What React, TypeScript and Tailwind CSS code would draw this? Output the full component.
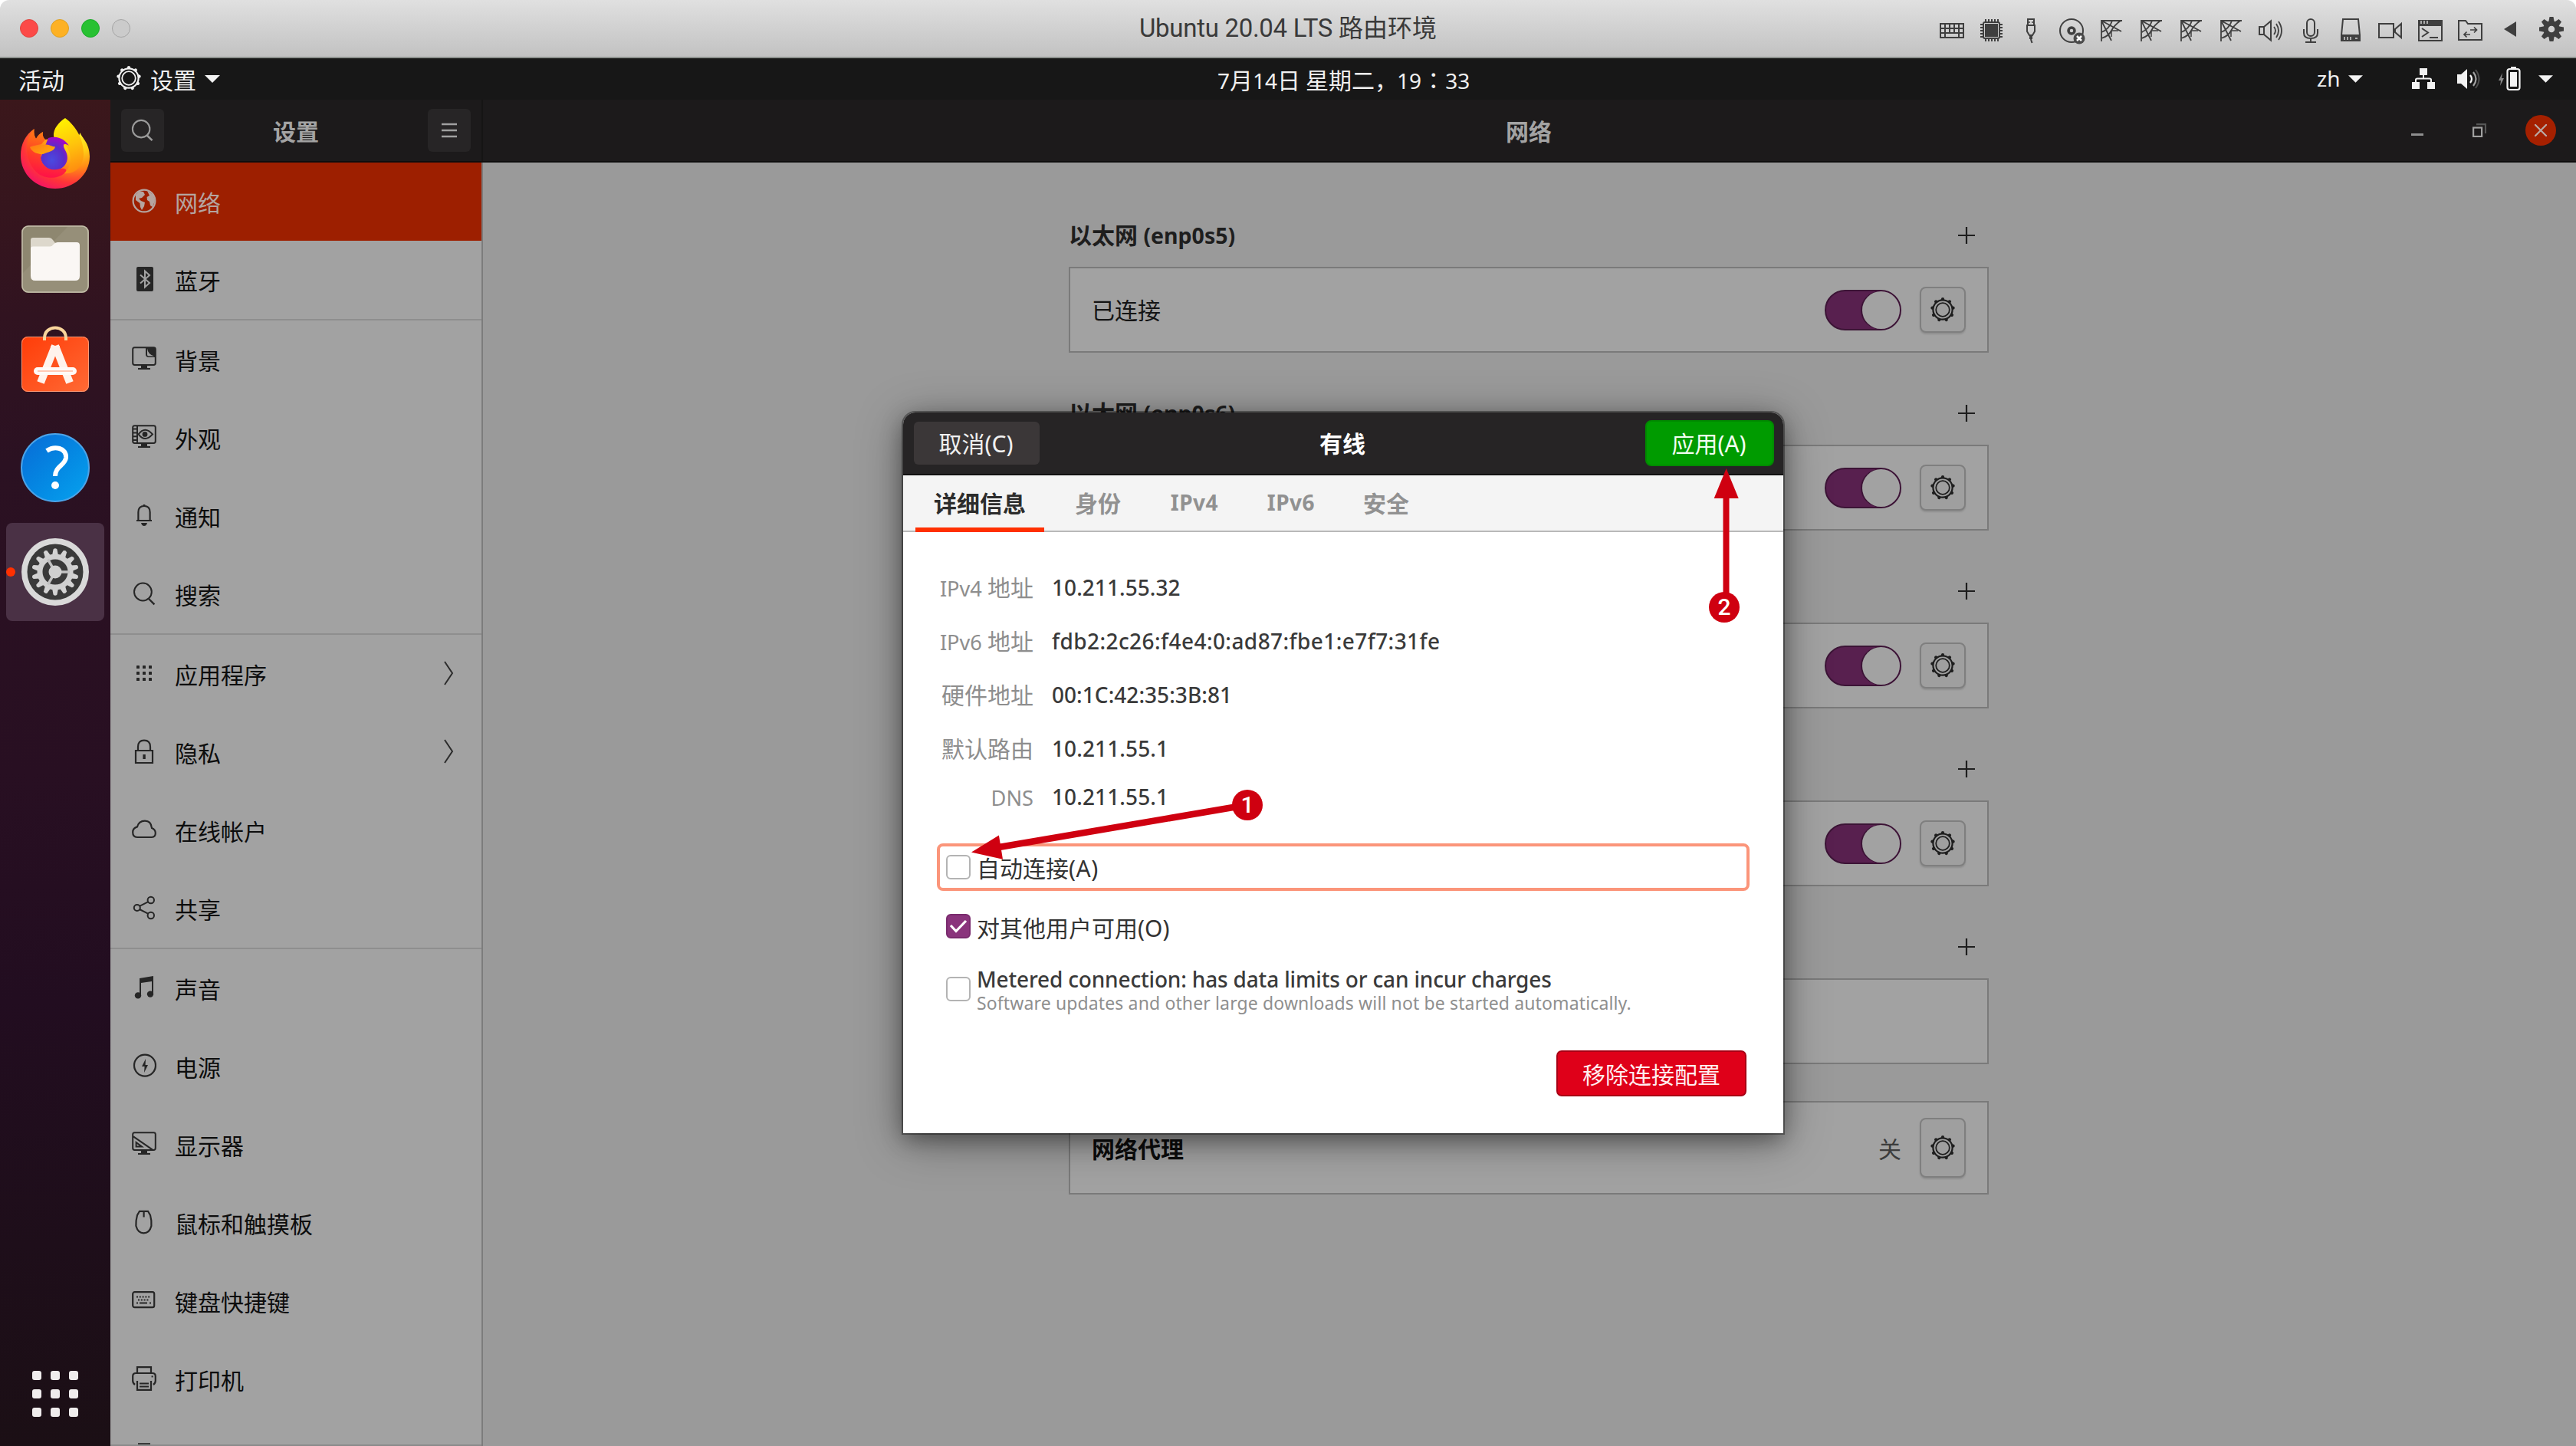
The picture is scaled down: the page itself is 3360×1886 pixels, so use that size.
import React from "react";

const SANS = "font-['Noto_Sans','Noto_Sans_CJK_SC',sans-serif]";

/* Latin runs are set slightly smaller than the Chinese characters beside them. */
function Txt({ children, latin = "text-[0.94em]" }: { children: string; latin?: string }) {
  const runs = children.split(/([\x20-\x7e]+)/).filter(Boolean);
  return (
    <>
      {runs.map((r, i) =>
        /^[\x20-\x7e]+$/.test(r) ? (
          <span key={i} className={latin}>{r}</span>
        ) : (
          <span key={i}>{r}</span>
        )
      )}
    </>
  );
}

/* ---------- host window title bar ---------- */

function ToolIcon({ children }: { children: React.ReactNode }) {
  return (
    <div className="flex w-[52px] justify-center">
      <svg className="h-9 w-9" viewBox="0 0 36 36" fill="none" stroke="#3f3f3f" strokeWidth="2">{children}</svg>
    </div>
  );
}

function NetPortIcon() {
  return (
    <ToolIcon>
      <path d="M5 32V5H32M5 5L31 19M5 5L18 31M5 28C12 26 16 22 18 18C20 14 23 10 30 5M5 20C11 18 17 12 19 5" strokeWidth="1.8" />
      <path d="M18 18L27 18M18 18V26" strokeWidth="1.5" />
    </ToolIcon>
  );
}

function HostBar() {
  return (
    <div className="flex h-[76px] items-center rounded-t-[12px] border-b-2 border-[#8f9390] bg-linear-to-b from-[#e0e0e0] to-[#c2c2c2] pl-[26px]">
      <div className="flex w-[1460px] gap-4">
        <div className="size-6 rounded-full border border-[#e0443e] bg-[#fc4a48]" />
        <div className="size-6 rounded-full border border-[#dea123] bg-[#fdb124]" />
        <div className="size-6 rounded-full border border-[#1aab29] bg-[#28c132]" />
        <div className="size-6 rounded-full border border-[#a5a5a5] bg-[#cbcbcb]" />
      </div>
      <div className="w-[1034px] whitespace-nowrap text-[32px] leading-[40px] text-[#3a3a3a] font-normal font-['Roboto','Noto_Sans_CJK_SC',sans-serif]">
        <Txt latin="text-[33px] tracking-[-0.3px]">Ubuntu 20.04 LTS 路由环境</Txt>
      </div>
      <div className="flex pt-[6px]">
        <ToolIcon>
          <path d="M3 9H33V27H3ZM3 15H33M3 21H33M9 9V21M15 9V21M21 9V21M27 9V21M9 21V27M27 21V27" />
        </ToolIcon>
        <ToolIcon>
          <rect x="7" y="7" width="21" height="21" rx="2" />
          <rect x="10" y="10" width="15" height="15" fill="#3f3f3f" />
          <path d="M10 3V7M14 3V7M18 3V7M22 3V7M26 3V7M10 28V32M14 28V32M18 28V32M22 28V32M26 28V32M3 10H7M3 14H7M3 18H7M3 22H7M3 26H7M28 10H32M28 14H32M28 18H32M28 22H32M28 26H32" />
        </ToolIcon>
        <ToolIcon>
          <path d="M13 3H21V11H13ZM12 11H22V19L19 24H15L12 19Z" />
          <path d="M15 6V8M19 6V8" strokeWidth="1.5" />
          <path d="M15 24H19V29H15Z" fill="#3f3f3f" stroke="none" />
          <path d="M17 28C17 32 18 31 18.500 34" />
        </ToolIcon>
        <ToolIcon>
          <circle cx="18" cy="18" r="15" />
          <circle cx="18" cy="18" r="4" strokeWidth="3.500" />
          <circle cx="28" cy="28" r="7.500" fill="#4a4a4a" stroke="none" />
          <path d="M25 25L31 31M31 25L25 31" stroke="#fff" strokeWidth="2.500" />
        </ToolIcon>
        <NetPortIcon />
        <NetPortIcon />
        <NetPortIcon />
        <NetPortIcon />
        <ToolIcon>
          <path d="M3 13H9L18 5.500V30.500L9 23H3ZM9 13V23" />
          <path d="M22 13Q26 18 22 23M25 9Q31 18 25 27M28 6Q36 18 28 30" strokeWidth="1.8" />
        </ToolIcon>
        <ToolIcon>
          <rect x="13" y="3" width="10" height="22" rx="5" />
          <path d="M9 16V21Q9 28 18 28Q27 28 27 21V16M18 28V33M11 33H25" />
        </ToolIcon>
        <ToolIcon>
          <path d="M8 3H28L30 24V31H6V24Z" />
          <path d="M6 24H30V31H6Z" fill="#3f3f3f" />
          <path d="M10 26V30M14 26V30M18 26V30M24 28H27" stroke="#d0d0d0" strokeWidth="1.5" />
        </ToolIcon>
        <ToolIcon>
          <path d="M3 9H22V27H3ZM24 16L32 9V27L24 20Z" />
        </ToolIcon>
        <ToolIcon>
          <path d="M3 5H33V31H3Z" />
          <path d="M3 5H33V11H3Z" fill="#3f3f3f" />
          <path d="M6 5V9M10 5V9M14 5V9" stroke="#d0d0d0" strokeWidth="1.5" />
          <path d="M7 15L15 20.500L7 26M17 27H28" />
        </ToolIcon>
        <ToolIcon>
          <path d="M3 30V5H12L15 9H33V30Z" />
          <path d="M11 23H18M13.500 19.500L10 23L13.500 26.500M18 17H26M23 13.500L26.500 17L23 20.500" strokeWidth="1.7" />
        </ToolIcon>
        <ToolIcon>
          <path d="M10 16L26 6V26Z" fill="#3f3f3f" stroke="none" />
        </ToolIcon>
        <ToolIcon>
          {[0, 45, 90, 135, 180, 225, 270, 315].map((a) => (
            <path key={a} d="M17.500 0H22.500L24 8H16Z" fill="#3f3f3f" stroke="none" transform={`rotate(${a} 20 16)`} />
          ))}
          <circle cx="20" cy="16" r="7.500" strokeWidth="6.500" />
        </ToolIcon>
      </div>
    </div>
  );
}

/* ---------- shared icons ---------- */

function GearIcon({ className }: { className: string }) {
  return (
    <svg className={className} viewBox="0 0 16 16" fill="none" stroke="currentColor">
      <circle cx="8" cy="8" r="6.300" strokeWidth="1.1" />
      <circle cx="8" cy="8" r="4.400" strokeWidth="0.9" />
      {[0, 40, 80, 120, 160, 200, 240, 280, 320].map((a) => (
        <circle key={a} cx="8" cy="1.100" r="1.050" fill="currentColor" stroke="none" transform={`rotate(${a} 8 8)`} />
      ))}
    </svg>
  );
}

function Caret({ className }: { className: string }) {
  return (
    <svg className={className} viewBox="0 0 20 10">
      <path d="M0 0H20L10 10Z" fill="#f2f2f2" />
    </svg>
  );
}

/* ---------- GNOME top panel ---------- */

function TopPanel() {
  return (
    <div className="flex h-[54px] items-center bg-[#171717] text-[30px] leading-[54px] text-[#f0f0f0] whitespace-nowrap">
      <div className="w-[128px] pt-1 pl-[24px]">活动</div>
      <div className="flex h-[54px] w-[1460px] items-center pl-[24px]">
        <GearIcon className="mb-[2px] size-8" />
        <span className="pt-1 pl-[12px]">设置</span>
        <Caret className="ml-[11px] h-[10px] w-5" />
      </div>
      <div className="flex h-[54px] w-[1434px] items-center pt-[3px]">
        <span className="mr-[7px]"><Txt latin="text-[28px]">7月14日</Txt></span>
        <span className="w-[119px]">星期二，</span>
        <span className="text-[28px]">19</span>
        <span lang="zh-TW" className="w-[31px] pb-[3px] text-center font-['Noto_Sans_CJK_TC']">：</span>
        <span className="text-[28px]">33</span>
      </div>
      <div className="flex h-[54px] items-center">
        <span className="w-[41px] pb-[2px] text-[28px]">zh</span>
        <Caret className="h-[10px] w-[19px]" />
        <svg className="ml-[63px] h-[28px] w-[32px]" viewBox="0 0 32 28">
          <path d="M11 0H21V9H11ZM1 18H11V27H1ZM21 18H31V27H21Z" fill="#f2f2f2" />
          <path d="M16 9V13.500M6 19V15Q6 13.500 8 13.500H24Q26 13.500 26 15V19" fill="none" stroke="#f2f2f2" strokeWidth="2" />
        </svg>
        <svg className="ml-[28px] h-[28px] w-[32px]" viewBox="0 0 32 28">
          <path d="M0 8H5L13 1V27L5 20H0Z" fill="#f2f2f2" />
          <path d="M17 9Q21 14 17 19" fill="none" stroke="#f2f2f2" strokeWidth="2.200" />
          <path d="M21 5Q28 14 21 23" fill="none" stroke="#a0a0a0" strokeWidth="2.200" />
          <path d="M24 2Q33 14 24 26" fill="none" stroke="#4d4d4d" strokeWidth="2" />
        </svg>
        <svg className="ml-[21px] h-[32px] w-[32px]" viewBox="0 0 32 32">
          <path d="M6 8L1 18H4L3 25L8 15H5Z" fill="#8a8a8a" />
          <rect x="12.500" y="3" width="16" height="27" rx="3" fill="none" stroke="#f2f2f2" strokeWidth="2.200" />
          <rect x="16" y="7" width="9" height="19" fill="#f2f2f2" />
          <rect x="17" y="0" width="7" height="3" fill="#f2f2f2" />
        </svg>
        <Caret className="ml-[21px] h-[10px] w-[19px]" />
      </div>
    </div>
  );
}

/* ---------- dock ---------- */

function Firefox() {
  return (
    <svg className="mb-1 h-[92px] w-[90px]" viewBox="0 0 90 92">
      <defs>
        <radialGradient id="ffBody" cx="0.8" cy="0.12" r="1.05">
          <stop offset="0" stopColor="#fff32c" />
          <stop offset="0.25" stopColor="#ffd016" />
          <stop offset="0.5" stopColor="#ff8a16" />
          <stop offset="0.75" stopColor="#ff3438" />
          <stop offset="1" stopColor="#f00a72" />
        </radialGradient>
        <linearGradient id="ffFlame" x1="0.4" y1="0" x2="0.6" y2="1">
          <stop offset="0" stopColor="#fff200" />
          <stop offset="0.5" stopColor="#ffc40c" />
          <stop offset="1" stopColor="#ff8a10" />
        </linearGradient>
        <radialGradient id="ffGlobe" cx="0.4" cy="0.7" r="0.7">
          <stop offset="0" stopColor="#4a4ae0" />
          <stop offset="0.6" stopColor="#5b2bc8" />
          <stop offset="1" stopColor="#a209c4" />
        </radialGradient>
        <linearGradient id="ffHead" x1="0" y1="0" x2="0.9" y2="0.7">
          <stop offset="0" stopColor="#ff7a14" />
          <stop offset="1" stopColor="#ffa80c" />
        </linearGradient>
        <linearGradient id="ffCheek" x1="0.3" y1="0" x2="0.4" y2="1">
          <stop offset="0" stopColor="#ff8010" />
          <stop offset="0.45" stopColor="#ff3a24" />
          <stop offset="1" stopColor="#ff0a4a" />
        </linearGradient>
      </defs>
      <path d="M17.500 14C17 20 18 24 20 27C22 23 25 20 29 18C28 23 30 26 32 28L60 24L74 28L77.500 19C80 26 90 33 90 50C90 74 69 92 45 92C20 92 0 73 0 49C0 34 6 22 17.500 14Z" fill="url(#ffBody)" />
      <path d="M58 0C72 10 82 28 82 46C82 62 72 74 56 72C66 66 68 50 60 38C56 32 46 30 43 24C42 14 50 5 58 0Z" fill="url(#ffFlame)" />
      <path d="M36 26C48 22 58 28 63 36C56 32 54 34 58 42C64 52 60 62 52 66C40 71 28 64 26 52L32 36Z" fill="url(#ffGlobe)" />
      <path d="M17.500 14C17 20 18 24 20 27C22 23 25 20 29 18C28 23 30 26 32 28L27 34L12 37C18 44 22 46 26 47C26 54 27 58 31 62C37 68 44 68 52 66C58 65 62 67 57 72C48 80 30 80 20 70C10 60 6 44 9 30C11 24 14 18 17.500 14Z" fill="url(#ffCheek)" opacity="0.8" />
      <path d="M12 38C18 35 24 36 30 35C36 33 40 37 45 37.500C44 43 36 44 29 47C22 47 15 45 12 38Z" fill="url(#ffHead)" />
    </svg>
  );
}

function Dock() {
  return (
    <div className="flex w-[144px] flex-col items-center bg-[linear-gradient(to_bottom,#3b171b,#311320_16%,#2b1122_27%,#280f22_50%,#220d20_67%,#1e0e1a_85%,#1b0f15)] pt-1">
      <div className="flex h-[136px] items-center"><Firefox /></div>
      <div className="flex h-[136px] items-center">
        <svg className="size-[90px]" viewBox="0 0 90 90">
          <rect x="1" y="1" width="88" height="88" rx="9" fill="#8e8770" />
          <path d="M62 2H80Q88 2 88 10V80Q88 88 80 88H10Q2 88 2 80V64Z" fill="#968f79" />
          <rect x="2" y="2" width="86" height="86" rx="8" fill="none" stroke="#c3bda9" strokeWidth="1.500" />
          <path d="M13 20Q13 17 16 17H37Q40 17 42 20L45 24V32H13Z" fill="#ddd8cc" />
          <path d="M13 31Q13 28.500 16 28.500H38Q41 28.500 43 25.500Q45 23 48 23H73Q77 23 77 27V67Q77 73 71 73H19Q13 73 13 67Z" fill="#faf7f4" />
        </svg>
      </div>
      <div className="flex h-[136px] items-center">
        <svg className="mb-[12px] h-[88px] w-[90px]" viewBox="0 0 90 88">
          <defs>
            <linearGradient id="bag" x1="0" y1="0" x2="1" y2="1">
              <stop offset="0" stopColor="#ff3c08" />
              <stop offset="1" stopColor="#ff6a35" />
            </linearGradient>
          </defs>
          <rect x="1" y="15" width="88" height="72" rx="8" fill="url(#bag)" />
          <rect x="1.500" y="15.500" width="87" height="71" rx="8" fill="none" stroke="#ff9c78" />
          <path d="M31 20V17C31 -1 59 -1 59 17V20" fill="none" stroke="#f8d59b" strokeWidth="4" />
          <path d="M45 27L26 75M45 27L64 75" stroke="#fff3ec" strokeWidth="10" />
          <path d="M39 27H51L49 36H41Z" fill="#fff3ec" />
          <rect x="17" y="55" width="56" height="10" rx="5" fill="#fffaf7" />
          <path d="M22 60H68" stroke="#ffc9b5" strokeWidth="2" />
        </svg>
      </div>
      <div className="flex h-[136px] items-center">
        <div className="flex size-[90px] items-center justify-center rounded-full border-2 border-[#4ba3e8] bg-linear-to-br from-[#0a6bd6] to-[#08a2ee]">
          <svg className="size-[70px]" viewBox="0 0 70 70">
            <path d="M24 13C34 6 50 9 49 22C48 32 35 33 35 46" fill="none" stroke="#fff" strokeWidth="6" />
            <circle cx="35" cy="58" r="5" fill="#fff" />
          </svg>
        </div>
      </div>
      <div className="relative flex h-[136px] w-[144px] items-center justify-center">
        <div className="flex size-32 items-center justify-center rounded-[8px] bg-[#4a3145]">
          <svg className="size-[90px]" viewBox="0 0 90 90">
            <circle cx="45" cy="45" r="44" fill="#d9d9d9" />
            <circle cx="45" cy="45" r="36.500" fill="#3a3a3a" />
            {Array.from({ length: 14 }, (_, i) => (
              <path key={i} d="M42.500 15.500Q45 13 47.500 15.500L49 24H41Z" fill="#d3d3d3" transform={`rotate(${(i * 360) / 14} 45 45)`} />
            ))}
            <circle cx="45" cy="45" r="20" fill="none" stroke="#cfcfcf" strokeWidth="7" />
            {[90, 210, 330].map((a) => (
              <path key={a} d="M45 45V26" stroke="#c2c2c2" strokeWidth="3.500" transform={`rotate(${a} 45 45)`} />
            ))}
            <circle cx="45" cy="45" r="8.500" fill="#d0d0d0" />
          </svg>
        </div>
        <div className="absolute left-2 top-[62px] size-3 rounded-full bg-[#ff3000]" />
      </div>
      <div className="mt-auto mb-[38px] grid grid-cols-3 gap-3">
        {Array.from({ length: 9 }, (_, i) => (
          <div key={i} className="size-3 rounded-[3px] bg-[#efecec]" />
        ))}
      </div>
    </div>
  );
}

/* ---------- settings sidebar ---------- */

const ICONS: Record<string, React.ReactNode> = {
  globe: (
    <>
      <circle cx="8" cy="8" r="7.200" strokeWidth="1.1" />
      <path d="M2.500 4L5 1.800L7.500 2L8.500 4L6.500 6L4.500 6.500L6 8L8.500 9L8 11.500L6.500 14L5.500 12L5.200 9.500L2.500 7.500Z" fill="currentColor" stroke="none" />
      <path d="M10 1.500L14 4L15 8L13.500 12L12 11L11.500 8.500L10 7.500L9.800 5.500L11.500 4.500Z" fill="currentColor" stroke="none" />
    </>
  ),
  bluetooth: (
    <>
      <rect x="3" y="0" width="11" height="16" rx="1" fill="currentColor" stroke="none" />
      <path d="M5.500 5.200L11.500 10.500L8.500 13.200V2.800L11.500 5.500L5.500 10.800" stroke="#a2a2a2" strokeWidth="1" />
    </>
  ),
  background: (
    <>
      <path d="M1.800 0.600H14.200Q15.400 0.600 15.400 1.800V10.800Q15.400 12 14.200 12H1.800Q0.600 12 0.600 10.800V1.800Q0.600 0.600 1.800 0.600Z" />
      <path d="M9 0.600H15.400V7H11Q9 7 9 5Z" fill="currentColor" stroke="none" />
      <path d="M10 1.200Q10.500 5.200 14.600 6.200H11Q10 6.200 10 5.200Z" fill="#a2a2a2" stroke="none" />
      <path d="M6 12H10V14H12V15H4V14H6Z" fill="currentColor" stroke="none" />
    </>
  ),
  appearance: (
    <>
      <path d="M1.800 0.600H14.200Q15.400 0.600 15.400 1.800V10.800Q15.400 12 14.200 12H1.800Q0.600 12 0.600 10.800V1.800Q0.600 0.600 1.800 0.600ZM3.500 1V12M1 2.800H3.500M1 5.200H3.500M1 7.600H3.500M1 10H3.500" />
      <path d="M4.300 6.200Q8.500 0.500 13.500 6.200Q8.500 11.800 4.300 6.200Z" />
      <circle cx="8.500" cy="6.200" r="1.200" fill="currentColor" />
      <path d="M6 12H10V14H12V15H4V14H6Z" fill="currentColor" stroke="none" />
    </>
  ),
  bell: (
    <>
      <path d="M3 11.500H13M4.200 11.500V6Q4.200 2 8 2Q11.800 2 11.800 6V11.500" strokeWidth="1.1" />
      <path d="M7.300 1H8.700V2.500H7.300ZM6 13H10Q9.500 15 8 15Q6.500 15 6 13Z" fill="currentColor" stroke="none" />
    </>
  ),
  search: (
    <>
      <circle cx="7.200" cy="7" r="5.700" strokeWidth="1" />
      <path d="M11 11.500L14.700 15.200" strokeWidth="1.2" />
    </>
  ),
  apps: (
    <g fill="currentColor" stroke="none">
      {[3, 7, 11].map((x) => [3, 7, 11].map((y) => <rect key={`${x}-${y}`} x={x} y={y} width="2" height="2" rx="0.300" />))}
    </g>
  ),
  lock: (
    <>
      <path d="M2.500 7.500H13.500V15.500H2.500ZM4 7.500V5Q4 0.800 8 0.800Q12 0.800 12 5V7.500" strokeWidth="1.1" />
      <rect x="7.200" y="10" width="1.700" height="3" fill="currentColor" stroke="none" />
    </>
  ),
  cloud: <path d="M3.500 13Q0.600 13 0.600 9.800Q0.600 7 3.500 6.200Q4.500 2.300 8.500 2.300Q12.500 2.300 13 7Q15.400 8 15.400 10.300Q15.400 13 13 13Z" strokeWidth="1.1" />,
  share: (
    <>
      <circle cx="3.400" cy="8" r="2" />
      <circle cx="12.400" cy="3" r="2.100" />
      <circle cx="12.400" cy="13" r="2.100" />
      <path d="M5 6.900L10.500 4.200M5 9L10.500 11.800" />
    </>
  ),
  music: (
    <g fill="currentColor" stroke="none">
      <path d="M5 2L14 0.500V12.500H13V4L6 5V13.500H5Z" />
      <circle cx="4" cy="13.200" r="2.100" />
      <circle cx="12" cy="12.300" r="2.100" />
    </g>
  ),
  power: (
    <>
      <circle cx="8.500" cy="7.800" r="7" strokeWidth="1.1" />
      <path d="M9 3.500L6.500 8.500H8.300L8 12.500L10.500 7.500H8.800Z" fill="currentColor" stroke="none" />
    </>
  ),
  display: (
    <>
      <path d="M1.800 0.600H14.200Q15.400 0.600 15.400 1.800V10.800Q15.400 12 14.200 12H1.800Q0.600 12 0.600 10.800V1.800Q0.600 0.600 1.800 0.600Z" />
      <path d="M1 3.200L13.500 11.800M2.800 7V9.800H6.500Z" />
      <path d="M6 12H10V14H12V15H4V14H6Z" fill="currentColor" stroke="none" />
    </>
  ),
  mouse: <path d="M5 0.900H10.500L12 3.500Q13 7 12.700 10.500Q11.500 15.200 7.700 15.200Q4 15.200 2.700 10.500Q2.500 7 3.500 3.500ZM7.800 1V4.800" strokeWidth="1.1" />,
  keyboard: (
    <>
      <rect x="0.600" y="2.600" width="14" height="10" rx="1.200" strokeWidth="1.1" />
      <path d="M3 5.700H12.500M4 7.700H11.500" strokeDasharray="1 0.900" />
      <path d="M3 9.800H4M5 9.800H10M11.500 9.800H12.500" />
    </>
  ),
  printer: (
    <>
      <path d="M3.500 4.500V0.600H12.500V4.500M2 12Q0.600 11 0.600 9.500V6.500Q0.600 4.500 2.600 4.500H13.400Q15.400 4.500 15.400 6.500V9.500Q15.400 11 14 12M3.500 9.500V15.400H12.500V9.500" strokeWidth="1.1" />
      <path d="M5 11.300H11M5 13.300H11" />
      <rect x="12.800" y="6.200" width="1" height="1" fill="currentColor" stroke="none" />
    </>
  ),
};

const GROUPS: { icon: string; label: string; active?: boolean; arrow?: boolean }[][] = [
  [
    { icon: "globe", label: "网络", active: true },
    { icon: "bluetooth", label: "蓝牙" },
  ],
  [
    { icon: "background", label: "背景" },
    { icon: "appearance", label: "外观" },
    { icon: "bell", label: "通知" },
    { icon: "search", label: "搜索" },
  ],
  [
    { icon: "apps", label: "应用程序", arrow: true },
    { icon: "lock", label: "隐私", arrow: true },
    { icon: "cloud", label: "在线帐户" },
    { icon: "share", label: "共享" },
  ],
  [
    { icon: "music", label: "声音" },
    { icon: "power", label: "电源" },
    { icon: "display", label: "显示器" },
    { icon: "mouse", label: "鼠标和触摸板" },
    { icon: "keyboard", label: "键盘快捷键" },
    { icon: "printer", label: "打印机" },
  ],
];

function Sidebar() {
  return (
    <div className="flex w-[486px] flex-col overflow-hidden border-r-2 border-[#7c7c7c] bg-[#a2a2a2]">
      {GROUPS.map((g, gi) => (
        <div key={gi} className={gi > 0 ? "shrink-0 border-t-2 border-[#8e8e8e]" : "shrink-0"}>
          {g.map((it) => (
            <div
              key={it.label}
              className={
                it.active
                  ? "flex h-[102px] items-center gap-6 bg-[#9d1f00] pl-7 text-[#b5a5a0]"
                  : "flex h-[102px] items-center gap-6 pl-7 text-[#262626]"
              }
            >
              <svg className="mb-[2px] size-8 shrink-0" viewBox="0 0 16 16" fill="none" stroke="currentColor" strokeWidth="1">
                {ICONS[it.icon]}
              </svg>
              <span className={it.active ? "pt-1 text-[30px] leading-10" : "pt-1 text-[30px] leading-10 text-[#0d0d0d]"}>{it.label}</span>
              {it.arrow && (
                <svg className="mr-[36px] mb-[2px] ml-auto h-8 w-[14px]" viewBox="0 0 14 32" fill="none" stroke="#2c2c2c" strokeWidth="2">
                  <path d="M2 1L12 16L2 31" />
                </svg>
              )}
            </div>
          ))}
        </div>
      ))}
      <div className="flex h-9 shrink-0 flex-col justify-end border-b-2 border-[#8a8a8a] pl-[36px]">
        <div className="h-[2px] w-4 bg-[#3a3a3a]" />
      </div>
    </div>
  );
}

/* ---------- network page ---------- */

function GearButton({ tall }: { tall?: boolean }) {
  return (
    <div
      className={
        tall
          ? "flex h-[78px] w-[60px] items-center justify-center rounded-[8px] border-2 border-[#7f7f7f] bg-[#9f9f9f] text-[#1e1e1e] shadow-[0_2px_2px_rgba(0,0,0,0.12)]"
          : "flex size-[60px] items-center justify-center rounded-[8px] border-2 border-[#7f7f7f] bg-[#9f9f9f] text-[#1e1e1e] shadow-[0_2px_2px_rgba(0,0,0,0.12)]"
      }
    >
      <GearIcon className="size-8" />
    </div>
  );
}

function Toggle() {
  return (
    <div className="mr-6 flex h-[53px] w-[100px] justify-end rounded-full border-2 border-[#3c1436] bg-[#58204f]">
      <div className="h-[49px] w-[49px] rounded-full bg-[#a2a2a2] shadow-[-2px_0_0_#3c1436]" />
    </div>
  );
}

function Section({ title, status, on = true, first }: { title?: string; status?: string; on?: boolean; first?: boolean }) {
  return (
    <div className={first ? "" : "mt-[38px]"}>
      <div className="flex h-[82px] items-center justify-between pr-[18px]">
        <span className="text-[30px] leading-10 font-bold text-[#1e1e1e]">
          {title && <Txt latin="text-[28.500px]">{title}</Txt>}
        </span>
        <svg className="size-[22px]" viewBox="0 0 22 22" stroke="#1e1e1e" strokeWidth="2.200">
          <path d="M0 11H22M11 0V22" />
        </svg>
      </div>
      <div className="flex h-[112px] items-center border-2 border-[#7a7a7a] bg-[#a2a2a2] pr-7 pl-[28px]">
        <span className="mr-auto pt-[2px] text-[30px] leading-10 text-[#141414]">{status}</span>
        {on && (
          <>
            <Toggle />
            <GearButton />
          </>
        )}
      </div>
    </div>
  );
}

function NetworkPage() {
  return (
    <div className="flex-1 bg-[#9a9a9a] pt-[54px]">
      <div className="ml-[764px] w-[1200px]">
        <Section first title="以太网 (enp0s5)" status="已连接" />
        <Section title="以太网 (enp0s6)" />
        <Section />
        <Section />
        <Section on={false} />
        <div className="mt-12 flex h-[122px] items-center border-2 border-[#7a7a7a] bg-[#a2a2a2] pr-7 pl-[28px]">
          <span className="mr-auto pt-1 text-[30px] leading-10 font-bold text-[#0d0d0d]">网络代理</span>
          <span className="mr-6 pt-1 text-[30px] leading-10 text-[#3c3c3c]">关</span>
          <GearButton tall />
        </div>
      </div>
    </div>
  );
}

function WindowHeader() {
  return (
    <div className="flex h-[82px] border-b-2 border-[#0f0e0e] bg-[#1c1a1b] text-[30px] font-bold text-[#a3a3a3]">
      <div className="flex w-[486px] items-center justify-between border-r-2 border-[#151414] pr-[14px] pl-[14px]">
        <div className="flex size-14 items-center justify-center rounded-[6px] bg-[#272526]">
          <svg className="size-[30px]" viewBox="0 0 16 16" fill="none" stroke="#9b9b9b">
            <circle cx="7" cy="7" r="6" strokeWidth="1.1" />
            <path d="M11 11.500L14.700 15" strokeWidth="1.4" />
          </svg>
        </div>
        <span className="pt-[2px]">设置</span>
        <div className="flex size-14 items-center justify-center rounded-[6px] bg-[#272526]">
          <svg className="size-5" viewBox="0 0 20 20" stroke="#a0a0a0" strokeWidth="2.400">
            <path d="M0 2H20M0 10H20M0 18H20" />
          </svg>
        </div>
      </div>
      <div className="flex flex-1 items-center">
        <span className="mr-auto w-[1400px] pt-[2px] pl-[1334px] whitespace-nowrap">网络</span>
        <div className="mt-[10px] mr-16 h-[3px] w-4 bg-[#8f8f8f]" />
        <svg className="mr-[51px] size-[18px]" viewBox="0 0 18 18" fill="none" strokeWidth="2.200">
          <path d="M5 1.100H17V13" stroke="#575757" />
          <rect x="1.100" y="5.500" width="11" height="11.500" stroke="#a0a0a0" />
        </svg>
        <div className="mr-[26px] flex size-10 items-center justify-center rounded-full bg-[#a52000]">
          <svg className="size-4" viewBox="0 0 16 16" stroke="#b9aaa6" strokeWidth="2.200">
            <path d="M0 0L16 16M16 0L0 16" />
          </svg>
        </div>
      </div>
    </div>
  );
}

/* ---------- connection dialog ---------- */

const DETAILS: [string, string, string][] = [
  ["IPv4 地址", "10.211.55.32", "tracking-[0.05px]"],
  ["IPv6 地址", "fdb2:2c26:f4e4:0:ad87:fbe1:e7f7:31fe", "tracking-[0.43px]"],
  ["硬件地址", "00:1C:42:35:3B:81", "tracking-[0.04px]"],
  ["默认路由", "10.211.55.1", "tracking-[0.1px]"],
  ["DNS", "10.211.55.1", "tracking-[0.1px]"],
];

function CheckBox({ checked }: { checked?: boolean }) {
  return checked ? (
    <div className="flex size-8 shrink-0 items-center justify-center rounded-[6px] border-2 border-[#7a2b6e] bg-[#8a347c]">
      <svg className="size-6" viewBox="0 0 24 24" fill="none" stroke="#fff" strokeWidth="3.200">
        <path d="M2 11L9 18.500L22 5" />
      </svg>
    </div>
  ) : (
    <div className="size-8 shrink-0 rounded-[6px] border-2 border-[#b3b3b3] bg-white" />
  );
}

function Dialog() {
  return (
    <div className="absolute top-[538px] left-[1178px] flex h-[940px] w-[1148px] flex-col overflow-visible rounded-t-[16px] bg-white shadow-[0_0_0_2px_rgba(0,0,0,0.35),0_8px_28px_rgba(0,0,0,0.35),0_10px_60px_rgba(0,0,0,0.35)]">
      <div className="flex h-[82px] items-center justify-between rounded-t-[16px] border-b-2 border-[#131212] bg-[#262425] pr-3 pl-[14px] text-[30px] leading-10 whitespace-nowrap">
        <div className="flex h-14 w-[164px] items-center justify-center rounded-[6px] bg-[#3b3738] pt-[2px] pr-[2px] text-[#f0f0f0]">取消(C)</div>
        <span className="pt-[2px] font-bold text-white">有线</span>
        <div className="flex h-[60px] w-[168px] items-center justify-center rounded-[8px] border-2 border-[#008a00] bg-[#009b00] pt-[2px] pr-[2px] text-[#f2fff2]">应用(A)</div>
      </div>
      <div className="flex h-[74px] border-b-2 border-[#b9b9b9] bg-[#f4f4f4] pl-4 text-[30px] leading-[74px] font-bold text-[#919191]">
        <div className="mr-[7px] h-[74px] w-[168px] border-b-[6px] border-[#ff3000] text-center text-[#2c2c2c]">详细信息</div>
        <div className="w-[126px] text-center">身份</div>
        <div className="w-[126px] text-center text-[28px] leading-[70px] tracking-[0.5px]">IPv4</div>
        <div className="w-[126px] text-center text-[28px] leading-[70px] tracking-[0.5px]">IPv6</div>
        <div className="w-[122px] text-center">安全</div>
      </div>
      <div className="mt-[38px] flex flex-col">
        {DETAILS.map(([k, v, t]) => (
          <div key={k} className={k === "DNS" ? "flex h-14 items-center" : "flex h-[70px] items-center"}>
            <span className="w-[170px] text-right text-[30px] leading-10 whitespace-nowrap text-[#8e8e8e]">
              <Txt latin="text-[27.200px]">{k}</Txt>
            </span>
            <span className="pb-[3px] pl-[24px] text-[28px] leading-10 font-medium text-[#3a3a3a]">
              <span className={t}>{v}</span>
            </span>
          </div>
        ))}
      </div>
      <div className="mt-8 ml-[44px] flex h-[62px] w-[1060px] items-center gap-2 rounded-[8px] border-4 border-[#fb957a] pl-2">
        <CheckBox />
        <span className="pt-[4px] text-[30px] leading-10 text-[#333]">自动连接<span className="tracking-[0.5px]">(A)</span></span>
      </div>
      <div className="mt-[15px] ml-[56px] flex h-[62px] items-center gap-2">
        <CheckBox checked />
        <span className="pt-[6px] text-[30px] leading-10 text-[#333]">对其他用户可用(O)</span>
      </div>
      <div className="mt-5 ml-[56px] flex h-[62px] items-center gap-2">
        <CheckBox />
        <div className="flex flex-col pt-px whitespace-nowrap">
          <span className="text-[28px] leading-[34px] font-medium tracking-[-0.17px] text-[#3a3a3a]">Metered connection: has data limits or can incur charges</span>
          <span className="text-[23px] leading-[28px] tracking-[0.13px] text-[#8f8f8f]">Software updates and other large downloads will not be started automatically.</span>
        </div>
      </div>
      <div className="mt-[49px] mr-12 flex h-[60px] w-[248px] items-center justify-center self-end rounded-[7px] border-2 border-[#a80014] bg-[#df0019] pt-[3px] text-[30px] leading-10 text-[#ffeef0]">
        移除连接配置
      </div>
    </div>
  );
}

/* Numbered arrows drawn over the screen. */
function Annotations() {
  return (
    <>
      <svg className="absolute top-[1025px] left-[1260px] h-[100px] w-[400px]" viewBox="1260 1025 400 100">
        <path d="M1626 1050L1303 1105" stroke="#cf0010" strokeWidth="8.500" />
        <path d="M1267 1111.500L1302.900 1089.500L1308 1120.800Z" fill="#cf0010" />
      </svg>
      <svg className="absolute top-[605px] left-[2220px] h-[190px] w-[60px]" viewBox="2220 605 60 190">
        <path d="M2251.500 645V785" stroke="#cf0010" strokeWidth="8" />
        <path d="M2251.700 611L2235.700 650H2267.700Z" fill="#cf0010" />
      </svg>
      <div className="absolute top-[1030px] left-[1607px] flex size-10 items-center justify-center rounded-full bg-[#cf0010] text-[30px] leading-10 text-white font-medium font-['Roboto',sans-serif]">1</div>
      <div className="absolute top-[772px] left-[2229px] flex size-10 items-center justify-center rounded-full bg-[#cf0010] text-[30px] leading-10 text-white font-medium font-['Roboto',sans-serif]">2</div>
    </>
  );
}

export default function App() {
  return (
    <div className={`relative flex h-[1886px] w-[3360px] flex-col overflow-hidden bg-white ${SANS}`} lang="zh-CN">
      <HostBar />
      <TopPanel />
      <div className="flex min-h-0 flex-1">
        <Dock />
        <div className="flex min-w-0 flex-1 flex-col">
          <WindowHeader />
          <div className="flex min-h-0 flex-1">
            <Sidebar />
            <NetworkPage />
          </div>
        </div>
      </div>
      <Dialog />
      <Annotations />
    </div>
  );
}
